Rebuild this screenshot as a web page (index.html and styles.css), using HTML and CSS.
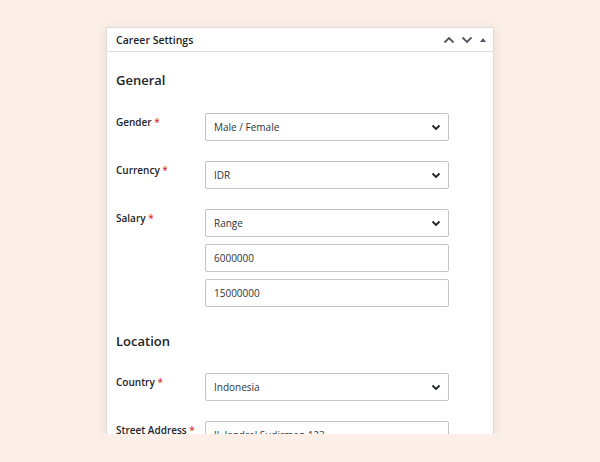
FILE: index.html
```html
<!DOCTYPE html>
<html lang="en">
<head>
    <meta charset="UTF-8">
    <meta name="viewport" content="width=device-width, initial-scale=1.0">
    <title>Career Settings</title>
    <link rel="stylesheet" href="styles.css">
</head>
<body>
    <div class="frame">
        <div class="postbox">
            <div class="postbox-header">
                <h2>Career Settings</h2>
                <div class="handle-actions">
                    <svg width="12" height="8" viewBox="0 0 12 8"><path d="M1.5 6.5 L6 2 L10.5 6.5" fill="none" stroke="#50575e" stroke-width="1.8"/></svg>
                    <svg width="12" height="8" viewBox="0 0 12 8"><path d="M1.5 1.5 L6 6 L10.5 1.5" fill="none" stroke="#50575e" stroke-width="1.8"/></svg>
                    <svg width="8" height="8" viewBox="0 0 8 8"><path d="M1 6 L4 2 L7 6 Z" fill="#50575e"/></svg>
                </div>
            </div>
            <div class="inside">
                <h3 class="section-title">General</h3>

                <div class="field-row">
                    <label>Gender <span class="req">*</span></label>
                    <div class="field-controls">
                        <div class="select-wrap">
                            <select><option>Male / Female</option></select>
                            <svg class="chevron" width="10" height="7" viewBox="0 0 10 7"><path d="M1.5 1.5 L5 5 L8.5 1.5" fill="none" stroke="#1d2327" stroke-width="1.8"/></svg>
                        </div>
                    </div>
                </div>

                <div class="field-row">
                    <label>Currency <span class="req">*</span></label>
                    <div class="field-controls">
                        <div class="select-wrap">
                            <select><option>IDR</option></select>
                            <svg class="chevron" width="10" height="7" viewBox="0 0 10 7"><path d="M1.5 1.5 L5 5 L8.5 1.5" fill="none" stroke="#1d2327" stroke-width="1.8"/></svg>
                        </div>
                    </div>
                </div>

                <div class="field-row">
                    <label>Salary <span class="req">*</span></label>
                    <div class="field-controls">
                        <div class="select-wrap">
                            <select><option>Range</option></select>
                            <svg class="chevron" width="10" height="7" viewBox="0 0 10 7"><path d="M1.5 1.5 L5 5 L8.5 1.5" fill="none" stroke="#1d2327" stroke-width="1.8"/></svg>
                        </div>
                        <input type="text" value="6000000">
                        <input type="text" value="15000000">
                    </div>
                </div>

                <h3 class="section-title location">Location</h3>

                <div class="field-row">
                    <label>Country <span class="req">*</span></label>
                    <div class="field-controls">
                        <div class="select-wrap">
                            <select><option>Indonesia</option></select>
                            <svg class="chevron" width="10" height="7" viewBox="0 0 10 7"><path d="M1.5 1.5 L5 5 L8.5 1.5" fill="none" stroke="#1d2327" stroke-width="1.8"/></svg>
                        </div>
                    </div>
                </div>

                <div class="field-row">
                    <label>Street Address <span class="req">*</span></label>
                    <div class="field-controls">
                        <input type="text" value="Jl. Jendral Sudirman 123">
                    </div>
                </div>
            </div>
        </div>
    </div>
</body>
</html>
```
FILE: styles.css
```css
body {
    margin: 0;
    background-color: #fbefe7;
    font-family: "Open Sans", "Noto Sans", Arial, sans-serif;
    color: #1d2327;
}
.frame {
    width: 388px;
    height: 407px;
    margin: 27px auto 0;
    overflow: hidden;
    box-shadow: 0 2px 10px rgba(120,80,50,0.12);
}
.postbox {
    background: #fff;
    border: 1px solid #dcdcde;
    border-bottom: none;
    min-height: 100%;
    box-sizing: border-box;
}
.postbox-header {
    display: flex;
    align-items: center;
    justify-content: space-between;
    height: 23px;
    padding: 0 6px 0 9px;
    border-bottom: 1px solid #dcdcde;
}
.postbox-header h2 {
    margin: 0;
    font-size: 10.5px;
    font-weight: 600;
}
.handle-actions {
    display: flex;
    align-items: center;
    gap: 6px;
}
.inside {
    padding: 18px 44px 20px 9px;
}
.section-title {
    margin: 0 0 23px;
    font-size: 13px;
    font-weight: 600;
    line-height: 20px;
}
.section-title.location {
    margin-top: 24px;
    margin-bottom: 22px;
}
.field-row {
    display: grid;
    grid-template-columns: 89px 1fr;
    margin-bottom: 20px;
}
.field-row label {
    font-size: 10px;
    font-weight: 600;
    padding-top: 2px;
}
.req {
    color: #d63638;
}
.field-controls {
    display: flex;
    flex-direction: column;
    gap: 7px;
}
.select-wrap {
    position: relative;
}
select, input {
    display: block;
    width: 100%;
    height: 28px;
    box-sizing: border-box;
    margin: 0;
    padding: 0 8px;
    border: 1px solid #c3c4c7;
    border-radius: 2px;
    background: #fff;
    font-family: inherit;
    font-size: 10px;
    color: #2c3338;
    -webkit-appearance: none;
    appearance: none;
}
.chevron {
    position: absolute;
    right: 8px;
    top: 11px;
}
```
